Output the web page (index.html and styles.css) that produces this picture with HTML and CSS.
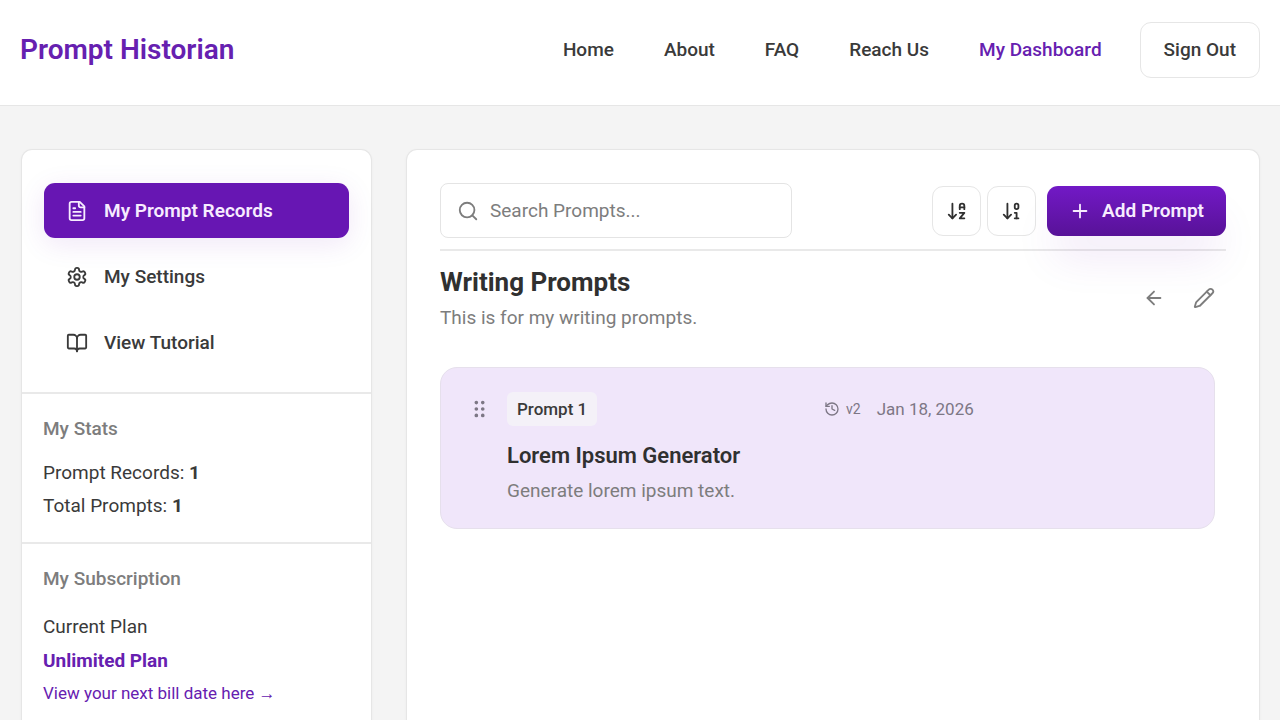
FILE: index.html
```html
<!DOCTYPE html>
<html lang="en">
<head>
<meta charset="utf-8">
<meta name="viewport" content="width=device-width, initial-scale=1">
<title>Prompt Historian</title>
<link rel="stylesheet" href="styles.css">
</head>
<body>
<header class="header">
  <a class="brand" href="#">Prompt Historian</a>
  <nav class="topnav" aria-label="Main">
    <a class="topnav-link" href="#">Home</a>
    <a class="topnav-link" href="#">About</a>
    <a class="topnav-link" href="#">FAQ</a>
    <a class="topnav-link" href="#">Reach Us</a>
    <a class="topnav-link topnav-current" href="#" aria-current="page">My Dashboard</a>
  </nav>
  <button class="signout" type="button">Sign Out</button>
</header>
<div class="layout">
  <aside class="panel sidebar">
    <nav class="sidenav" aria-label="Dashboard">
      <a class="side-link side-active" href="#">
        <svg class="icon" viewBox="0 0 24 24" aria-hidden="true"><path d="M15 2H6a2 2 0 0 0-2 2v16a2 2 0 0 0 2 2h12a2 2 0 0 0 2-2V7Z"/><path d="M14 2v4a2 2 0 0 0 2 2h4"/><path d="M10 9H8"/><path d="M16 13H8"/><path d="M16 17H8"/></svg>
        My Prompt Records</a>
      <a class="side-link" href="#">
        <svg class="icon" viewBox="0 0 24 24" aria-hidden="true"><path d="M12.22 2h-.44a2 2 0 0 0-2 2v.18a2 2 0 0 1-1 1.73l-.43.25a2 2 0 0 1-2 0l-.15-.08a2 2 0 0 0-2.73.73l-.22.38a2 2 0 0 0 .73 2.73l.15.1a2 2 0 0 1 1 1.72v.51a2 2 0 0 1-1 1.74l-.15.09a2 2 0 0 0-.73 2.73l.22.38a2 2 0 0 0 2.73.73l.15-.08a2 2 0 0 1 2 0l.43.25a2 2 0 0 1 1 1.73V20a2 2 0 0 0 2 2h.44a2 2 0 0 0 2-2v-.18a2 2 0 0 1 1-1.73l.43-.25a2 2 0 0 1 2 0l.15.08a2 2 0 0 0 2.73-.73l.22-.39a2 2 0 0 0-.73-2.73l-.15-.08a2 2 0 0 1-1-1.74v-.5a2 2 0 0 1 1-1.74l.15-.09a2 2 0 0 0 .73-2.73l-.22-.38a2 2 0 0 0-2.73-.73l-.15.08a2 2 0 0 1-2 0l-.43-.25a2 2 0 0 1-1-1.73V4a2 2 0 0 0-2-2z"/><circle cx="12" cy="12" r="3"/></svg>
        My Settings</a>
      <a class="side-link" href="#">
        <svg class="icon" viewBox="0 0 24 24" aria-hidden="true"><path d="M12 7v14"/><path d="M3 18a1 1 0 0 1-1-1V4a1 1 0 0 1 1-1h5a4 4 0 0 1 4 4 4 4 0 0 1 4-4h5a1 1 0 0 1 1 1v13a1 1 0 0 1-1 1h-6a3 3 0 0 0-3 3 3 3 0 0 0-3-3z"/></svg>
        View Tutorial</a>
    </nav>
    <section class="side-section">
      <h2 class="side-title">My Stats</h2>
      <p class="stat">Prompt Records: <strong>1</strong></p>
      <p class="stat">Total Prompts: <strong>1</strong></p>
    </section>
    <section class="side-section">
      <h2 class="side-title side-title-roomy">My Subscription</h2>
      <p class="plan">Current Plan</p>
      <p class="plan plan-name">Unlimited Plan</p>
      <a class="bill-link" href="#">View your next bill date here <span class="arrow">→</span></a>
    </section>
  </aside>
  <main class="panel content">
    <div class="toolbar">
      <label class="search">
        <svg class="icon" viewBox="0 0 24 24" aria-hidden="true"><circle cx="11" cy="11" r="8"/><path d="m21 21-4.3-4.3"/></svg>
        <input class="search-input" type="search" placeholder="Search Prompts..." aria-label="Search Prompts">
      </label>
      <div class="actions">
        <button class="sort" type="button" aria-label="Sort alphabetically">
          <svg class="icon icon-sort" viewBox="0 0 24 24" aria-hidden="true"><path d="m3 16 4 4 4-4"/><path d="M7 20V4"/><path d="M20 8h-5"/><path d="M15 10V6.5a2.5 2.5 0 0 1 5 0V10"/><path d="M15 14h5l-5 6h5"/></svg>
        </button>
        <button class="sort" type="button" aria-label="Sort by number">
          <svg class="icon icon-sort" viewBox="0 0 24 24" aria-hidden="true"><path d="m3 16 4 4 4-4"/><path d="M7 20V4"/><rect x="15" y="4" width="4" height="6" ry="2"/><path d="M17 20v-6h-2"/><path d="M15 20h4"/></svg>
        </button>
        <button class="add" type="button">
          <svg class="icon" viewBox="0 0 24 24" aria-hidden="true"><path d="M5 12h14"/><path d="M12 5v14"/></svg>
          Add Prompt</button>
      </div>
    </div>
    <div class="record-head">
      <div>
        <h1 class="record-title">Writing Prompts</h1>
        <p class="description">This is for my writing prompts.</p>
      </div>
      <div class="record-tools">
        <button class="tool" type="button" aria-label="Back"><svg class="icon" viewBox="0 0 24 24" aria-hidden="true"><path d="m12 19-7-7 7-7"/><path d="M19 12H5"/></svg></button>
        <button class="tool" type="button" aria-label="Edit"><svg class="icon" viewBox="0 0 24 24" aria-hidden="true"><path d="M21.174 6.812a1 1 0 0 0-3.986-3.987L3.842 16.174a2 2 0 0 0-.5.83l-1.321 4.352a.5.5 0 0 0 .623.622l4.353-1.32a2 2 0 0 0 .83-.497z"/><path d="m15 5 4 4"/></svg></button>
      </div>
    </div>
    <article class="prompt">
      <svg class="icon grip" viewBox="0 0 24 24" aria-hidden="true"><circle cx="8" cy="5" r="1"/><circle cx="8" cy="12" r="1"/><circle cx="8" cy="19" r="1"/><circle cx="15" cy="5" r="1"/><circle cx="15" cy="12" r="1"/><circle cx="15" cy="19" r="1"/></svg>
      <div class="prompt-body">
        <div class="prompt-meta">
          <span class="badge">Prompt 1</span>
          <div class="revision">
            <span class="version"><svg class="icon icon-history" viewBox="0 0 24 24" aria-hidden="true"><path d="M3 12a9 9 0 1 0 9-9 9.75 9.75 0 0 0-6.74 2.74L3 8"/><path d="M3 3v5h5"/><path d="M12 7v5l4 2"/></svg>v2</span>
            <time datetime="2026-01-18">Jan 18, 2026</time>
          </div>
        </div>
        <h2 class="prompt-title">Lorem Ipsum Generator</h2>
        <p class="description">Generate lorem ipsum text.</p>
      </div>
    </article>
  </main>
</div>
</body>
</html>
```
FILE: styles.css
```css
* { box-sizing: border-box; }

body {
  margin: 0;
  min-height: 100vh;
  display: flex;
  flex-direction: column;
  background: #f4f4f4;
  color: #3a3a3a;
  font-family: Roboto, "Liberation Sans", sans-serif;
  font-size: 19px;
  line-height: 32px;
}

h1, h2, p { margin: 0; }
a { color: inherit; text-decoration: none; }
button, input { font: inherit; color: inherit; }
button { cursor: pointer; }

.icon {
  width: 22px;
  height: 22px;
  flex: none;
  display: block;
  fill: none;
  stroke: currentColor;
  stroke-width: 2;
  stroke-linecap: round;
  stroke-linejoin: round;
}

.header {
  display: flex;
  align-items: center;
  padding: 22px 20px 27px;
  background: #fff;
  border-bottom: 1px solid #e6e6e6;
}
.brand {
  margin-right: auto;
  color: #6620b0;
  font-size: 28px;
  font-weight: 600;
}
.topnav {
  display: flex;
  gap: 50px;
  margin-right: 38px;
  font-weight: 500;
}
.topnav-current { color: #6620b0; }
.signout {
  height: 56px;
  padding: 0 23px;
  background: #fff;
  border: 1px solid #e6e6e6;
  border-radius: 11px;
  font-weight: 500;
}

.layout {
  flex: 1;
  display: grid;
  grid-template-columns: 351px 1fr;
  gap: 34px;
  padding: 43px 20px 0 21px;
}
.panel {
  background: #fff;
  border: 1px solid #e6e6e6;
  border-bottom: 0;
  border-radius: 11px 11px 0 0;
  box-shadow: 0 1px 3px rgba(0, 0, 0, .04);
}

.sidenav {
  display: grid;
  gap: 11px;
  padding: 33px 22px 22px;
}
.side-link {
  display: flex;
  align-items: center;
  gap: 16px;
  height: 55px;
  padding: 0 22px;
  border-radius: 11px;
  font-weight: 500;
}
.side-active {
  background: #6716b3;
  color: #f7ecff;
  font-weight: 600;
  box-shadow: 0 6px 28px rgba(103, 22, 179, .1);
}
.side-section {
  padding: 19px 21px 20px;
  border-top: 2px solid #e9e9e9;
}
.side-title {
  margin-bottom: 11px;
  color: #7d7d7d;
  font-size: 19px;
  font-weight: 500;
}
.side-title-roomy { margin-bottom: 15px; }
.stat { line-height: 33px; }
.plan { line-height: 34px; }
.plan-name { color: #6620b0; font-weight: 700; }
.bill-link {
  display: block;
  color: #6620b0;
  font-size: 17px;
  line-height: 30px;
}
.arrow { font-family: "Liberation Sans", sans-serif; }

.content { padding: 33px; }
.toolbar {
  display: flex;
  align-items: center;
  justify-content: space-between;
  padding-bottom: 11px;
  border-bottom: 2px solid #e9e9e9;
}
.search {
  display: flex;
  align-items: center;
  gap: 11px;
  width: 352px;
  height: 55px;
  padding: 0 16px;
  border: 1px solid #e4e4e4;
  border-radius: 8px;
  color: #7d7d7d;
}
.search-input {
  flex: 1;
  min-width: 0;
  padding: 0;
  border: 0;
  outline: 0;
  background: none;
}
.search-input::placeholder { color: #7d7d7d; opacity: 1; }
.actions { display: flex; align-items: center; }
.sort {
  display: grid;
  place-items: center;
  width: 49px;
  height: 50px;
  margin-right: 6px;
  padding: 0;
  background: #fff;
  border: 1px solid #e6e6e6;
  border-radius: 11px;
}
.sort + .add { margin-left: 5px; }
.add {
  display: flex;
  align-items: center;
  gap: 11px;
  height: 50px;
  padding: 0 22px;
  border: 0;
  border-radius: 11px;
  background: linear-gradient(#7219c6, #581298);
  color: #f7ecff;
  font-weight: 600;
  box-shadow: 0 28px 44px -8px rgba(103, 22, 179, .1);
}

.record-head {
  display: flex;
  align-items: flex-start;
  justify-content: space-between;
  padding: 13px 11px 31px 0;
}
.record-title {
  font-size: 26px;
  font-weight: 700;
  line-height: 36px;
  color: #303030;
}
.description { color: #7d7d7d; line-height: 36px; }
.record-tools {
  display: flex;
  gap: 28px;
  padding-top: 23px;
  color: #7d7d7d;
}
.tool { padding: 0; border: 0; background: none; }

.prompt {
  display: flex;
  gap: 16px;
  margin-right: 11px;
  padding: 24px 27px 19px 28px;
  background: #f0e6fa;
  border: 1px solid #e6e0ec;
  border-radius: 17px;
}
.grip { margin-top: 6px; color: #7d7785; }
.prompt-body { flex: 1; }
.prompt-meta {
  display: grid;
  grid-template-columns: 317px 1fr;
  align-items: center;
  margin-bottom: 13px;
  font-size: 17px;
}
.badge {
  justify-self: start;
  padding: 0 10px;
  background: #f4f1f8;
  border-radius: 6px;
  font-weight: 500;
  line-height: 34px;
}
.revision { display: flex; align-items: center; gap: 16px; color: #7d7785; }
.version { display: flex; align-items: center; gap: 6px; font-size: 14px; }
.prompt-title {
  color: #303030;
  font-size: 22px;
  font-weight: 600;
  line-height: 34px;
}
.icon-sort { color: #303030; }
.icon-history { width: 16px; height: 16px; }
```
